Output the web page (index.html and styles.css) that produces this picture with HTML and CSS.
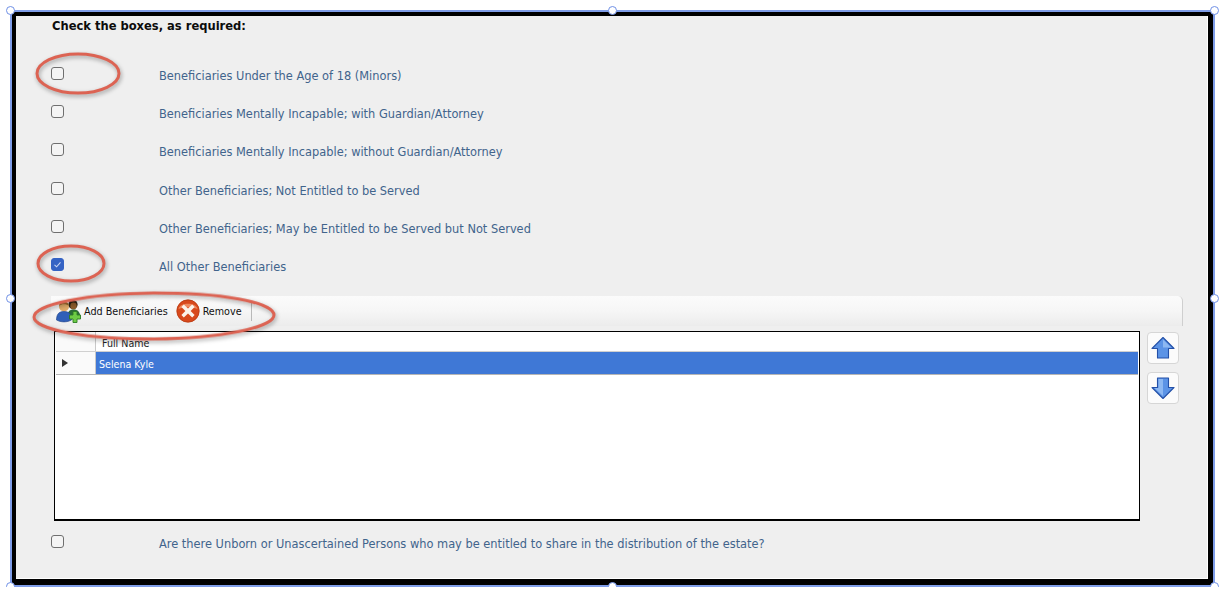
FILE: index.html
```html
<!DOCTYPE html>
<html lang="en">
<head>
    <meta charset="UTF-8">
    <title>Beneficiaries</title>
    <link rel="stylesheet" href="styles.css">
</head>
<body>
    <div class="selection">
        <div class="frame">
            <div class="panel">
                <h1 class="panel-title">Check the boxes, as required:</h1>

                <div class="check-list">
                    <div class="check-row"><span class="box"></span><span class="check-label">Beneficiaries Under the Age of 18 (Minors)</span></div>
                    <div class="check-row"><span class="box"></span><span class="check-label">Beneficiaries Mentally Incapable; with Guardian/Attorney</span></div>
                    <div class="check-row"><span class="box"></span><span class="check-label">Beneficiaries Mentally Incapable; without Guardian/Attorney</span></div>
                    <div class="check-row"><span class="box"></span><span class="check-label">Other Beneficiaries; Not Entitled to be Served</span></div>
                    <div class="check-row"><span class="box"></span><span class="check-label">Other Beneficiaries; May be Entitled to be Served but Not Served</span></div>
                    <div class="check-row">
                        <span class="box checked">
                            <svg width="13" height="13" viewBox="0 0 13 13"><path d="M3.5 6.8 L5.6 8.8 L9.5 4.4" fill="none" stroke="#c9d6f2" stroke-width="1.1"/></svg>
                        </span>
                        <span class="check-label">All Other Beneficiaries</span>
                    </div>
                </div>

                <div class="toolbar">
                    <div class="tool">
                        <svg width="26" height="26" viewBox="0 0 26 26">
                            <circle cx="17" cy="6.5" r="4.6" fill="#2a2114"/>
                            <ellipse cx="17.5" cy="8" rx="3.2" ry="3.4" fill="#8a5a2a"/>
                            <path d="M11 20 C11 14 13.5 11.5 17.5 11.5 C21.5 11.5 24.5 14 24.5 20 Z" fill="#2c6b3a"/>
                            <circle cx="8" cy="8.5" r="5" fill="#e0aa68"/>
                            <path d="M3 8 C3.4 2.4 12.6 2.4 13 8 C10.5 5.8 5.5 5.8 3 8 Z" fill="#9a6a2c"/>
                            <path d="M0.5 22 C0.5 16 3 13.5 8 13.5 C13 13.5 15.5 16 15.5 22 C11 24.5 5 24.5 0.5 22 Z" fill="#2f5fb8" stroke="#1d3f86" stroke-width="0.6"/>
                            <path d="M17 13.5 h4 v3.5 h3.5 v4 h-3.5 v3.5 h-4 v-3.5 h-3.5 v-4 h3.5 Z" fill="#6ecb46" stroke="#2e7d22" stroke-width="0.9"/>
                        </svg>
                        <span class="tool-text">Add Beneficiaries</span>
                    </div>
                    <div class="tool">
                        <svg width="24" height="24" viewBox="0 0 24 24">
                            <circle cx="12" cy="12" r="11.2" fill="#d8491c" stroke="#b8380f" stroke-width="0.8"/>
                            <path d="M2.5 10 C4 3 20 3 21.5 10 C16 7.5 8 7.5 2.5 10 Z" fill="#ee8a5f"/>
                            <path d="M7.8 5.6 L12 9.6 L16.2 5.6 L18.6 8 L14.6 12 L18.6 16 L16.2 18.4 L12 14.4 L7.8 18.4 L5.4 16 L9.4 12 L5.4 8 Z" fill="#fbf3ea"/>
                        </svg>
                        <span class="tool-text">Remove</span>
                    </div>
                    <span class="tool-sep"></span>
                </div>

                <div class="grid-area">
                    <div class="grid">
                        <div class="grid-head">
                            <div class="row-head"></div>
                            <div class="head-cell">Full Name</div>
                        </div>
                        <div class="grid-row">
                            <div class="row-head"><span class="row-arrow"></span></div>
                            <div class="row-cell">Selena Kyle</div>
                        </div>
                    </div>
                    <div class="order-btns">
                        <div class="order-btn">
                            <svg width="26" height="26" viewBox="0 0 26 26"><path d="M13 2.5 L24 13.5 H18.5 V23 H7.5 V13.5 H2 Z" fill="#5b93e6" stroke="#2450a8" stroke-width="1.1" stroke-linejoin="round"/><path d="M13 4.5 L21 12.5 H13 Z" fill="#8db8f2"/></svg>
                        </div>
                        <div class="order-btn">
                            <svg width="26" height="26" viewBox="0 0 26 26"><path d="M13 23.5 L24 12.5 H18.5 V3 H7.5 V12.5 H2 Z" fill="#5b93e6" stroke="#2450a8" stroke-width="1.1" stroke-linejoin="round"/><path d="M8.5 4 H13 V21 L4.5 13 H8.5 Z" fill="#8db8f2"/></svg>
                        </div>
                    </div>
                </div>

                <div class="check-row last-row"><span class="box"></span><span class="check-label">Are there Unborn or Unascertained Persons who may be entitled to share in the distribution of the estate?</span></div>
            </div>
        </div>

        <!-- red marks drawn over the screenshot -->
        <svg class="marks" width="1232" height="604" viewBox="0 0 1232 604">
            <ellipse cx="78" cy="73.5" rx="41" ry="19.5"/>
            <ellipse cx="71" cy="263.5" rx="33" ry="17.5"/>
            <ellipse cx="154" cy="316" rx="120" ry="23" transform="rotate(-0.5 154 316)"/>
        </svg>

        <span class="handle h-tl"></span>
        <span class="handle h-tc"></span>
        <span class="handle h-tr"></span>
        <span class="handle h-ml"></span>
        <span class="handle h-mr"></span>
        <span class="handle h-bl"></span>
        <span class="handle h-bc"></span>
        <span class="handle h-br"></span>
    </div>
</body>
</html>
```

FILE: styles.css
```css
* {
    margin: 0;
    padding: 0;
    box-sizing: border-box;
}

body {
    background: #ffffff;
    font-family: "DejaVu Sans", Verdana, sans-serif;
    overflow: hidden;
}

.selection {
    position: relative;
    width: 1205px;
    height: 577px;
    margin: 10px 0 0 10px;
    border: 2px solid #7f9de8;
}

.frame {
    height: 100%;
    border-style: solid;
    border-color: #000000;
    border-width: 4px 5px 6px 4px;
}

.panel {
    height: 100%;
    padding-left: 35px;
    background: #efefef;
    border-right: 1px solid #ffffff;
    border-bottom: 1px solid #ffffff;
}

.panel-title {
    height: 20px;
    margin-left: 1px;
    font-family: "DejaVu Sans Condensed", "DejaVu Sans", sans-serif;
    font-size: 12.8px;
    line-height: 20px;
    font-weight: bold;
    color: #0c0c0c;
}

.check-list {
    margin-top: 20px;
}

.check-row {
    display: flex;
    align-items: center;
    height: 38.2px;
}

.box {
    flex: none;
    width: 13px;
    height: 13px;
    margin: -3px 95px 0 0;
    background: #f4f4f4;
    border: 1px solid #6f6f6f;
    border-radius: 3px;
}

.box.checked {
    background: #3563c4;
    border-color: #3563c4;
}

.box.checked svg {
    display: block;
    margin: -1px;
}

.check-label {
    padding-top: 2px;
    font-size: 11.4px;
    color: #41648c;
    white-space: nowrap;
}

.toolbar {
    display: flex;
    align-items: center;
    width: 1132px;
    height: 30px;
    margin-top: 11px;
    padding-left: 5px;
    background: linear-gradient(#fbfbfb, #f6f6f6 50%, #ececec);
    border-top-right-radius: 5px;
    border-right: 1px solid #cfcfcf;
}

.tool {
    display: flex;
    align-items: center;
    gap: 2px;
    margin-right: 8px;
}

.tool + .tool {
    gap: 3px;
}

.tool-text {
    font-family: "DejaVu Sans Condensed", "DejaVu Sans", sans-serif;
    font-size: 10.7px;
    color: #111111;
    white-space: nowrap;
}

.tool-sep {
    width: 1px;
    height: 20px;
    margin-left: 1px;
    background: #b9b9b9;
}

.grid-area {
    display: flex;
    margin-top: 5px;
    margin-left: 3px;
}

.grid {
    width: 1086px;
    height: 190px;
    background: #ffffff;
    border: 1px solid #000000;
    border-bottom-width: 2px;
    padding: 0 1px;
}

.grid-head,
.grid-row {
    display: flex;
}

.grid-head {
    height: 20px;
    border-bottom: 1px solid #d0d0d0;
}

.grid-row {
    height: 23px;
    border-bottom: 1px solid #b5b5b5;
}

.row-head {
    display: flex;
    align-items: center;
    flex: none;
    width: 40px;
    padding-left: 6px;
    background: #fafafa;
    border-right: 1px solid #c8c8c8;
}

.head-cell {
    flex: 1;
    padding: 3px 0 0 6px;
    font-family: "DejaVu Sans Condensed", "DejaVu Sans", sans-serif;
    font-size: 10.6px;
    line-height: 16px;
    color: #222222;
}

.row-arrow {
    width: 0;
    height: 0;
    border-left: 6px solid #333333;
    border-top: 4.5px solid transparent;
    border-bottom: 4.5px solid transparent;
}

.row-cell {
    flex: 1;
    padding: 1px 0 0 3px;
    background: #3f78d6;
    font-family: "DejaVu Sans Condensed", "DejaVu Sans", sans-serif;
    font-size: 10.6px;
    line-height: 22px;
    color: #ffffff;
}

.order-btns {
    display: flex;
    flex-direction: column;
    gap: 8px;
    margin: 1px 0 0 7px;
}

.order-btn {
    display: flex;
    align-items: center;
    justify-content: center;
    width: 32px;
    height: 32px;
    background: #fbfbfb;
    border: 1px solid #d6d6d6;
    border-radius: 4px;
}

.last-row {
    margin-top: 3px;
}

.marks {
    position: absolute;
    left: -12px;
    top: -12px;
    pointer-events: none;
}

.marks ellipse {
    fill: none;
    stroke: #dc6353;
    stroke-width: 3;
    filter: drop-shadow(1px 2px 2px rgba(0, 0, 0, 0.35));
}

.handle {
    position: absolute;
    width: 9px;
    height: 9px;
    background: #ffffff;
    border: 1.5px solid #6f90e6;
    border-radius: 50%;
}

.h-tl { left: -6px; top: -6px; }
.h-tc { left: 596px; top: -6px; }
.h-tr { left: 1198px; top: -6px; }
.h-ml { left: -6px; top: 282px; }
.h-mr { left: 1198px; top: 282px; }
.h-bl { left: -6px; top: 570px; }
.h-bc { left: 596px; top: 570px; }
.h-br { left: 1198px; top: 570px; }
```
